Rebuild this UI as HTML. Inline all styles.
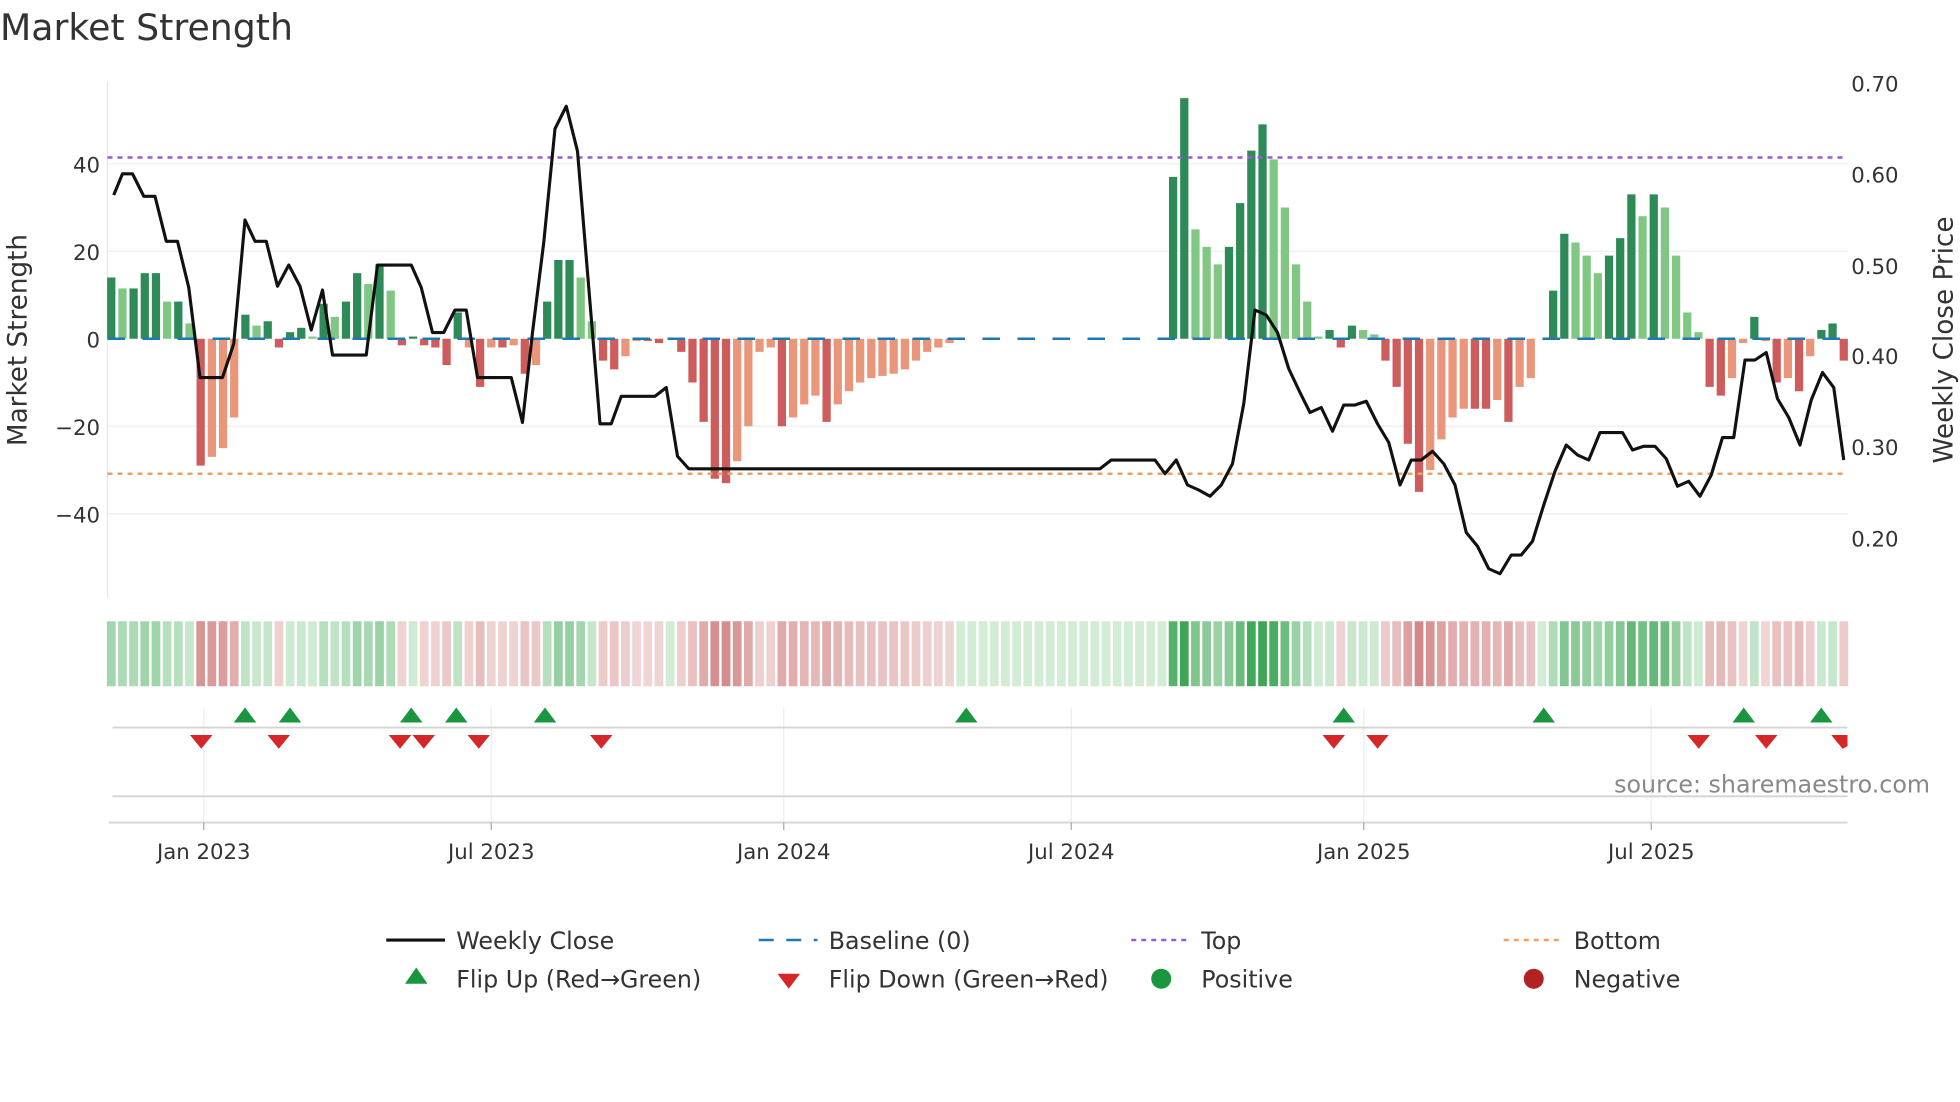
<!DOCTYPE html>
<html><head><meta charset="utf-8"><style>
html,body{margin:0;padding:0;background:#fff;width:1960px;height:1102px;overflow:hidden}
svg text{font-family:"DejaVu Sans","Liberation Sans",sans-serif}
</style></head><body>
<svg id="s" width="1960" height="1102" viewBox="0 0 1568 881.6" xmlns="http://www.w3.org/2000/svg">
<rect width="1568" height="882" fill="#fff"/>
<text x="0" y="32" font-size="29" fill="#333">Market Strength</text>
<g stroke="#eceef2" stroke-width="1">
<line x1="86" x2="1478" y1="131" y2="131"/><line x1="86" x2="1478" y1="201" y2="201"/>
<line x1="86" x2="1478" y1="341" y2="341"/><line x1="86" x2="1478" y1="411" y2="411"/>
</g>
<line x1="86" x2="86" y1="65" y2="478" stroke="#e6e6e6"/>
<g font-size="17" fill="#333" text-anchor="end">
<text x="80" y="138">40</text><text x="80" y="208">20</text><text x="80" y="278">0</text>
<text x="80" y="348">−20</text><text x="80" y="418">−40</text>
</g>
<g font-size="17" fill="#333">
<text x="1481" y="73">0.70</text><text x="1481" y="146">0.60</text><text x="1481" y="219">0.50</text>
<text x="1481" y="291">0.40</text><text x="1481" y="364">0.30</text><text x="1481" y="437">0.20</text>
</g>
<text transform="translate(21,272) rotate(-90)" font-size="21" fill="#333" text-anchor="middle">Market Strength</text>
<text transform="translate(1562,272) rotate(-90)" font-size="21" fill="#333" text-anchor="middle">Weekly Close Price</text>
<g id="bars"></g>
<line x1="86" x2="1478" y1="271" y2="271" stroke="#1f77b4" stroke-width="2" stroke-dasharray="14,14"/>
<line x1="86" x2="1478" y1="126" y2="126" stroke="#9b59d6" stroke-width="2" stroke-dasharray="4,4"/>
<line x1="86" x2="1478" y1="379" y2="379" stroke="#f0a060" stroke-width="2" stroke-dasharray="4,4"/>
<polyline id="pl" fill="none" stroke="#111" stroke-width="2.5" stroke-linejoin="round"/>
<g id="heat"></g>
<g stroke="#eeeeee"><line x1="163" x2="163" y1="566" y2="658"/><line x1="393" x2="393" y1="566" y2="658"/><line x1="627" x2="627" y1="566" y2="658"/><line x1="857" x2="857" y1="566" y2="658"/><line x1="1091" x2="1091" y1="566" y2="658"/><line x1="1321" x2="1321" y1="566" y2="658"/></g>
<line x1="90" x2="1478" y1="582" y2="582" stroke="#d4d4d4" stroke-width="1.5"/>
<line x1="90" x2="1478" y1="637" y2="637" stroke="#d4d4d4" stroke-width="1.5"/>
<line x1="87" x2="1478" y1="658" y2="658" stroke="#d4d4d4" stroke-width="1.5"/>
<g id="tri"></g>
<text x="1544" y="634" font-size="19" fill="#888" text-anchor="end">source: sharemaestro.com</text>
<g font-size="17" fill="#333" text-anchor="middle">
<text x="163" y="687">Jan 2023</text><text x="393" y="687">Jul 2023</text><text x="627" y="687">Jan 2024</text>
<text x="857" y="687">Jul 2024</text><text x="1091" y="687">Jan 2025</text><text x="1321" y="687">Jul 2025</text>
</g>
<g stroke="#aaa"><line x1="163" x2="163" y1="658" y2="664"/><line x1="393" x2="393" y1="658" y2="664"/><line x1="627" x2="627" y1="658" y2="664"/><line x1="857" x2="857" y1="658" y2="664"/><line x1="1091" x2="1091" y1="658" y2="664"/><line x1="1321" x2="1321" y1="658" y2="664"/></g>
<g font-size="19" fill="#333">
<line x1="309" x2="356" y1="752" y2="752" stroke="#111" stroke-width="2.5"/><text x="365" y="759">Weekly Close</text>
<line x1="607" x2="654" y1="752" y2="752" stroke="#1f77b4" stroke-width="2" stroke-dasharray="12,10"/><text x="663" y="759">Baseline (0)</text>
<line x1="905" x2="952" y1="752" y2="752" stroke="#9b59d6" stroke-width="2" stroke-dasharray="4,4"/><text x="961" y="759">Top</text>
<line x1="1203" x2="1250" y1="752" y2="752" stroke="#f0a060" stroke-width="2" stroke-dasharray="4,4"/><text x="1259" y="759">Bottom</text>
<polygon points="333,774 342,787 324,787" fill="#1a9641"/><text x="365" y="790">Flip Up (Red→Green)</text>
<polygon points="622,779 640,779 631,791" fill="#d62728"/><text x="663" y="790">Flip Down (Green→Red)</text>
<circle cx="929" cy="783" r="8" fill="#1a9641"/><text x="961" y="790">Positive</text>
<circle cx="1227" cy="783" r="8" fill="#b22222"/><text x="1259" y="790">Negative</text>
</g>
</svg>
<script>
var NS="http://www.w3.org/2000/svg";
function el(t,a,p){var e=document.createElementNS(NS,t);for(var k in a)e.setAttribute(k,a[k]);document.getElementById(p).appendChild(e);return e;}
var d="14D 11.5L 11.5D 15D 15D 8.5L 8.5D 3.5L -29R -27S -25S -18S 5.5D 3L 4D -2R 1.5D 2.5D 0.5L 8D 5L 8.5D 15D 12.5L 17D 11L -1.5R 0.5D -1.5R -2R -6R 6D -2S -11R -2S -2R -1.5S -8R -6S 8.5D 18D 18D 14L 4L -5R -7R -4S -0.5S -0.5R -1R 0S -3R -10R -19R -32R -33R -28S -20S -3S -2S -20R -18S -15S -13S -19R -15S -12S -10S -9S -8.5S -8S -7S -5S -3S -2S -1S".split(" ");
for(var i=0;i<19;i++)d.push("0L");
d=d.concat("37D 55D 25L 21L 17L 21D 31D 43D 49D 41L 30L 17L 8.5L 0.5L 2D -2R 3D 2L 1L -5R -11R -24R -35R -30S -23S -18S -16S -16R -16R -14S -19R -11S -9S 0L 11D 24D 22L 19L 15L 19D 23D 33D 28L 33D 30L 19L 6L 1.5L -11R -13R -9S -1S 5D -0.5S -10R -9S -12R -4S 2D 3.5D -5R".split(" "));
var col={D:"#2e8b57",L:"#81c784",R:"#cd5c5c",S:"#e9967a"};
var x0=89,dx=(1475-89)/(d.length-1);
d.forEach(function(s,i){var v=parseFloat(s),t=s.slice(-1),x=x0+i*dx;
 if(Math.abs(v)>0.1){var h=Math.abs(v)*3.5;el("rect",{x:x-3.3,y:v>0?271-h:271,width:6.6,height:h,fill:col[t]},"bars");}
 var a=Math.min(1,Math.abs(v)/45);var c;
 if(v>=0){c="rgb("+Math.round(210-150*a)+","+Math.round(236-70*a)+","+Math.round(214-130*a)+")";}
 else{c="rgb("+Math.round(240-40*a)+","+Math.round(214-100*a)+","+Math.round(214-100*a)+")";}
 el("rect",{x:x-3.5,y:497,width:7,height:52,fill:c},"heat");
});
var p="91,156 98,139 106,139 115,157 124,157 133,193 142,193 151,230 160,302 169,302 178,302 187,275 196,176 204,193 213,193 222,229 231,212 240,229 249,264 258,232 266,284 275,284 284,284 293,284 302,212 311,212 320,212 329,212 337,230 346,266 355,266 364,248 373,248 382,302 391,302 400,302 409,302 418,338 426,266 435,194 444,103 453,85 462,121 471,230 480,339 489,339 497,317 506,317 515,317 524,317 533,310 542,365 551,375 880,375 889,368 924,368 932,379 941,368 950,388 959,392 968,397 977,388 986,371 995,323 1004,248 1013,252 1022,266 1031,295 1040,314 1048,330 1057,326 1066,345 1075,324 1084,324 1093,321 1102,339 1111,354 1120,388 1129,368 1137,368 1146,361 1155,371 1164,388 1173,426 1182,437 1191,455 1200,459 1209,444 1217,444 1226,433 1235,404 1244,377 1253,356 1262,364 1271,368 1280,346 1289,346 1298,346 1306,360 1315,357 1324,357 1333,367 1342,389 1351,385 1360,397 1369,380 1378,350 1387,350 1396,288 1404,288 1413,282 1422,319 1431,334 1440,356 1449,320 1458,298 1467,310 1475,368";
document.getElementById("pl").setAttribute("points",p);
[196,232,329,365,436,773,1075,1235,1395,1457].forEach(function(x){el("polygon",{points:(x)+",566 "+(x+9)+",578 "+(x-9)+",578",fill:"#1a9641"},"tri");});
[161,223,320,339,383,481,1067,1102,1359,1413,1474].forEach(function(x){var r=Math.min(x+9,1478);el("polygon",{points:(x-9)+",588 "+r+",588 "+(r==x+9?x:r)+","+(r==x+9?599:597)+" "+x+",599",fill:"#d62728"},"tri");});
</script>
</body></html>
